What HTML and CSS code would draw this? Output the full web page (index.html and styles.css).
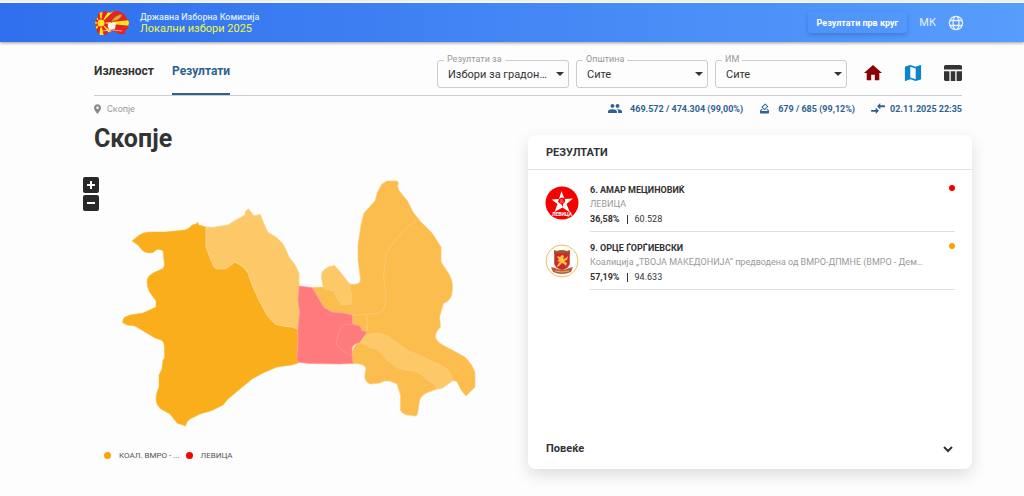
FILE: index.html
```html
<!DOCTYPE html>
<html lang="mk">
<head>
<meta charset="utf-8">
<meta name="viewport" content="width=device-width, initial-scale=1">
<title>Локални избори 2025</title>
<link rel="stylesheet" href="styles.css">
</head>
<body>
<header class="topbar">
  <a class="brand" href="#">
    <svg class="brand-logo" viewBox="0 0 36 26" aria-hidden="true">
      <defs><clipPath id="land"><path d="M1 11 4 7 4 3 9 2 12 1 16 3 20 1 24 1 29 3 32 7 35 12 34 18 31 21 31 24 25 24 20 21 15 22 12 25 6 25 3 22 2 17Z"/></clipPath></defs>
      <g clip-path="url(#land)">
        <path fill="#e32424" d="M0 0h36v26H0z"/>
        <path fill="#ffe51f" d="M7 13 5-1h4zM7 13 16-1h6zM7 13 37 10v6zM7 13 5 27h5zM7 13-1 6V1zM7 13-1 19v5zM7 13-1 11v4zM7 13 18 27h6z"/>
        <circle cx="7" cy="13" r="4.400" fill="#e32424"/><circle cx="7" cy="13" r="3.500" fill="#ffe51f"/>
      </g>
      <path fill="#f8f3ec" d="M14 13q5-1 8 0l-1 6-6 1q-2-4-1-7z"/>
      <path fill="#e4a934" stroke="#8b651f" stroke-width=".4" d="M17 13q2-7 11-9-1 6-9 7z"/>
      <path d="M8 21q10-2 20 0" fill="none" stroke="#f2c6b8" stroke-width=".8"/>
    </svg>
    <span class="brand-text"><span class="brand-org">Државна Изборна Комисија</span><span class="brand-name">Локални избори 2025</span></span>
  </a>
  <div class="top-actions">
    <button class="round-btn" type="button">Резултати прв круг</button>
    <button class="lang-btn" type="button">МК
      <svg viewBox="0 0 16 16" aria-hidden="true"><g fill="none" stroke="currentColor" stroke-width="1.300"><circle cx="8" cy="8" r="6.600"/><ellipse cx="8" cy="8" rx="2.900" ry="6.600"/><path d="M2 5.500h12M2 10.500h12"/></g></svg>
    </button>
  </div>
</header>

<div class="toolbar">
  <nav class="tabs">
    <a class="tab" href="#">Излезност</a>
    <a class="tab tab-active" href="#">Резултати</a>
  </nav>
  <form class="filters">
    <div class="field"><label for="type">Резултати за</label><select id="type"><option>Избори за градоначалник</option></select></div>
    <div class="field"><label for="mun">Општина</label><select id="mun"><option>Сите</option></select></div>
    <div class="field"><label for="im">ИМ</label><select id="im"><option>Сите</option></select></div>
  </form>
  <div class="views">
    <a href="#" class="view view-home" aria-label="Почетна"><svg viewBox="2 2 20 20"><path d="M10 20v-6h4v6h5v-8h3L12 3 2 12h3v8z"/></svg></a>
    <a href="#" class="view view-map" aria-label="Мапа"><svg viewBox="2 2 20 20"><path d="M20.500 3l-.160.030L15 5.100 9 3 3.360 4.900c-.210.070-.360.250-.360.480V20.500c0 .280.220.500.500.500l.160-.030L9 18.900l6 2.100 5.640-1.900c.210-.070.360-.250.360-.480V3.500c0-.280-.220-.500-.500-.500zM15 19l-6-2.110V5l6 2.110V19z"/></svg></a>
    <a href="#" class="view view-table" aria-label="Табела"><svg viewBox="2 2 20 20"><path d="M9.500 10h5v11h-5zM16 21h4c1.100 0 2-.9 2-2v-9h-6v11zM20 3H4c-1.100 0-2 .9-2 2v3h20V5c0-1.100-.9-2-2-2zM2 19c0 1.100.9 2 2 2h4V10H2v9z"/></svg></a>
  </div>
</div>

<div class="status">
  <div class="place"><svg viewBox="4 1 16 22" aria-hidden="true"><path d="M12 1C7.600 1 4 4.600 4 9c0 6 8 14 8 14s8-8 8-14c0-4.400-3.600-8-8-8zm0 11a3 3 0 1 1 0-6 3 3 0 0 1 0 6z"/></svg>Скопје</div>
  <div class="stats">
    <span class="stat"><svg class="stat-wide" viewBox="1 4 22 16" aria-hidden="true"><path d="M16 11c1.660 0 2.990-1.340 2.990-3S17.660 5 16 5s-3 1.340-3 3 1.340 3 3 3zm-8 0c1.660 0 2.990-1.340 2.990-3S9.660 5 8 5 5 6.340 5 8s1.340 3 3 3zm0 2c-2.330 0-7 1.170-7 3.500V19h14v-2.500c0-2.330-4.670-3.500-7-3.500zm8 0c-.290 0-.620.020-.970.050 1.160.840 1.970 1.970 1.970 3.450V19h6v-2.500c0-2.330-4.670-3.500-7-3.500z"/></svg>469.572 / 474.304 (99,00%)</span>
    <span class="stat"><svg class="stat-ballot" viewBox="2 1 20 22" aria-hidden="true"><path d="M18 13h-.680l-2 2h1.910L19 17H5l1.780-2h2.050l-2-2H6l-3 3v4c0 1.100.890 2 1.990 2H19c1.100 0 2-.890 2-2v-4l-3-3zM17 7.950l-4.950 4.950-3.540-3.540 4.950-4.950L17 7.950zm-4.240-5.660L6.390 8.660a1 1 0 0 0 0 1.410l4.950 4.950a1 1 0 0 0 1.410 0l6.360-6.360a1 1 0 0 0 0-1.410L14.160 2.300a1 1 0 0 0-1.400-.010z"/></svg>679 / 685 (99,12%)</span>
    <span class="stat stat-time"><svg class="stat-wide" viewBox="0 0 15 12" aria-hidden="true"><path d="M0 7.500h5V5l3.500 3.500L5 12V9.500H0zM15 2.500h-5V0L6.500 3.500 10 7V4.500h5z"/></svg>02.11.2025 22:35</span>
  </div>
</div>

<main class="content">
  <section class="map-pane">
    <h1>Скопје</h1>
    <div class="map-box">
      <svg class="map" viewBox="94 157 434 284" role="img" aria-label="Мапа на Скопје">
        <g stroke-width="1" stroke-linejoin="round">
          <path fill="#fbae1c" stroke="#fbb633" stroke-width=".5" d="M132 241 138 236Q143 232 150 232L165 232 185 230 189 228 192 225 196 224 197.500 222 199 225 206 227 206 247 211 260 214 267 220 269 226 268 235 262 243 267 248 273 253 287 259 300 267 315 275 324 283 326 292 327 297.500 329 298 343 297 350 297 360 299.500 362.500 292 365 277 367 263 373 252 379 240 389 228 399 223 405 212 410.500 200 414 190 419 187 422 185.500 426 177 423 170 414 161 409Q156 405 156 399L156.500 394 159 387 159 375 162 369 163 360 164.500 358V347Q164 341 161 340L155 338 145 332 135 326 127 325 122.500 322.500Q123 318 125 317L130 315 143 313 156 307V301L149 291Q145 280 149 276L153 273 163 268.500 164.500 265 163 251Q162 249 157 249.500L153 252.500Q146 254 142 250L138 245Z"/>
          <path fill="#fcc868" stroke="#fdd388" d="M206 227 213 227.500 228 225 236 220 245 215 246 211 248.500 209 254 216 260 214.500 267.500 232 277 238 283 244 289 257 295 265 299 273V287L298 303 299.500 318 297.500 329 292 327 283 326 275 324 267 315 259 300 253 287 248 273Q245 267 235 262L226 268.500Q216 270 214 267L211 260 206 247Z"/>
          <path fill="#fbbe4e" stroke="#fcc96a" stroke-width=".6" d="M312 287.500 323 287 349 284Q361 286 360.500 279L358 260V245L361 225 364 213 375 201 377.500 192 382 184 387 181H397L398.500 183 397.500 186Q398 190 401 193L407.500 201 413 212 420 221 432 233 441 247V262L449 274Q454 284 452 292 452 300 443.500 303.500L439.500 317 440.500 327Q434 333 436 339L440 343.500 465 357Q473 365 475 373V387L466 396 461 390 457 381.500 452.500 380.500 442 388 437 389 426 393Q419 397 419 404L417.500 414 416 416 407 415Q401 413 400.500 410V395L397 384 390 381H384L380 383 370 384Q364 381 365 375L366 368Q364 363 352.500 363.500L351.500 356Q353 344 360 342.500L366 334V331H362.500L360 326 352.500 324V315L343 313 332 312 324 307.500Z"/>
          <path fill="#ff7a7d" stroke="#ff9b9b" stroke-width=".7" d="M299 286 312 287.500 324 307.500 332 312 343 313 352.500 315V324L360 326 362.500 331H366V334L360 342.500Q352 344 352 349L352 356 353 363.500 340 364 310 363.500 300 362.500Q296 361 297 357L298 343V327L299.500 313 298 300Z"/>
          <path fill="none" stroke="#ff8d8e" d="M352.500 324 345 324.500 339.500 330 336.500 341Q336 346 342 350L351.500 356"/>
          <path fill="#fcc868" stroke="#fdd07c" stroke-width=".7" d="M323 286 321.500 278Q321 272 325 269 329 266 334.500 265.500L341 273 349.500 284 352 298 350.500 304.500H342L338 300 334 291 325 289Z"/>
          <path fill="#fcc868" stroke="#fdd07c" stroke-width=".7" d="M360 342.500 365 335.500Q376 331 388 336.500L407 350 423 357 440 365 448.500 370 453 380.500 442 388 437 389 435 385 427 379.500 418 372 398 368 387 360 378 349.500 370 347.500Z"/>
          <path fill="none" stroke="#fccb70" d="M416 221Q408 225 403 231L390 247Q385 253 385.500 260L383.500 277 386 295Q385 311 380 313L367 314.500 352.500 315M367 314.500V331"/>
        </g>
      </svg>
      <div class="zoom"><button type="button" aria-label="Зголеми"><svg viewBox="0 0 16 16"><path d="M8 4v8M4 8h8"/></svg></button><button type="button" aria-label="Намали"><svg viewBox="0 0 16 16"><path d="M4 8h8"/></svg></button></div>
    </div>
    <ul class="legend">
      <li><span class="dot dot-orange"></span>КОАЛ. ВМРО - ...</li>
      <li><span class="dot dot-red"></span>ЛЕВИЦА</li>
    </ul>
  </section>

  <section class="card">
    <h2>РЕЗУЛТАТИ</h2>
    <ul class="results">
      <li class="result">
        <svg class="party" viewBox="0 0 34 34" aria-hidden="true">
          <circle cx="17" cy="17" r="16.500" fill="#f70000"/>
          <path fill="#fff" d="M16.500 5 19.500 13 28 12.500 21.500 18 25 26.500 17.500 21.500 9.500 26 12.500 18 6.500 13.500 14 13z"/>
          <path fill="#f70000" d="M14 13q3-3 6 0v3l-2 2v3l-2-3-3-2z"/><path d="M15 14h3M15 16h4" stroke="#fff" stroke-width=".5"/>
          <text class="party-name" x="17" y="30" text-anchor="middle">ЛЕВИЦА</text>
        </svg>
        <div class="result-body">
          <div class="result-head"><h3>6. АМАР МЕЦИНОВИЌ</h3><span class="dot dot-red"></span></div>
          <p class="coalition">ЛЕВИЦА</p>
          <p class="votes"><strong>36,58%</strong><span class="bar"></span>60.528</p>
        </div>
      </li>
      <li class="result">
        <svg class="party" viewBox="0 0 34 34" aria-hidden="true">
          <circle cx="17" cy="17" r="16" fill="#fff" stroke="#efbd61"/>
          <path fill="#a8562e" d="M9 6l3 1q5-2 10 0l3-1v4H9z"/>
          <path fill="#cf2730" stroke="#a9522c" stroke-width=".6" d="M9.500 9h15v10q0 5-7.500 7-7.500-2-7.500-7z"/>
          <path fill="#ffc542" d="M12 12l3 1 2-2 2 1-1 3 3-1 2-2-1 4-3 1 3 2-1 3-2-2-2-1-3 3-2 1 1-3 2-2-3-1 2-1z"/>
          <path fill="#b85a35" d="M6 23l4 1q7 4 14 0l4-1-2 5q-9 4-18 0z"/>
          <path d="M10 27q7 2 14 0" stroke="#e2b15d" fill="none"/>
        </svg>
        <div class="result-body">
          <div class="result-head"><h3>9. ОРЦЕ ЃОРЃИЕВСКИ</h3><span class="dot dot-orange"></span></div>
          <p class="coalition">Коалиција „ТВОЈА МАКЕДОНИЈА“ предводена од ВМРО-ДПМНЕ (ВМРО - Дем…</p>
          <p class="votes"><strong>57,19%</strong><span class="bar"></span>94.633</p>
        </div>
      </li>
    </ul>
    <button class="more" type="button">Повеќе<svg viewBox="0 0 12 12" aria-hidden="true"><path d="M2 4l4 4 4-4"/></svg></button>
  </section>
</main>
</body>
</html>
```

FILE: styles.css
```css
* { box-sizing: border-box; }
body { margin: 0; background: #fdfdfd; color: #333; font: 10px/14px Roboto, sans-serif; }
h1, h2, h3, p, ul { margin: 0; padding: 0; }
ul { list-style: none; }
a { color: inherit; text-decoration: none; }
button { font: inherit; border: 0; background: none; padding: 0; color: inherit; cursor: pointer; }
svg { display: block; flex: none; }

.topbar { display: flex; align-items: center; justify-content: space-between; height: 42px; padding: 3px 60px 0 94px; background: linear-gradient(#eeefef 0 2px, #fdfdfd 2px) top / 100% 3px no-repeat, linear-gradient(90deg, #2f6fed, #579dfc); box-shadow: 0 1px 3px rgba(0, 0, 0, .4); }
.brand { display: flex; align-items: center; gap: 10px; }
.brand-logo { width: 36px; height: 26px; }
.brand-text { display: flex; flex-direction: column; line-height: 11px; }
.brand-org { color: #dde9ff; font-size: 9px; font-weight: 500; }
.brand-name { color: #f4f63b; font-size: 11px; }
.top-actions { display: flex; align-items: center; gap: 12px; }
.round-btn { height: 21px; padding: 0 9px; border-radius: 3px; color: #fff; font-weight: 700; font-size: 9px; box-shadow: 0 2px 4px rgba(30, 60, 130, .3); }
.lang-btn { display: flex; align-items: center; gap: 12px; color: #e5efff; font-size: 11px; }
.lang-btn svg { width: 16px; height: 16px; }

.toolbar { display: flex; align-items: stretch; height: 54px; margin: 0 62px 0 94px; border-bottom: 1px solid #ccc; }
.tabs { display: flex; gap: 18px; }
.tab { padding-top: 22px; font-size: 12px; font-weight: 700; }
.tab-active { color: #2d6292; border-bottom: 2px solid #2d6292; }
.filters { display: flex; gap: 7px; margin-left: auto; padding-top: 18px; }
.field { position: relative; width: 132px; height: 28px; }
.field::after { content: ""; position: absolute; right: 5px; top: 12px; border: 4px solid transparent; border-top-color: #333; border-bottom: 0; pointer-events: none; }
.field label { position: absolute; left: 7px; top: -8px; padding: 0 3px; background: #fdfdfd; color: #999; font-size: 9px; line-height: 14px; }
.field select { appearance: none; width: 100%; height: 100%; padding: 0 18px 0 10px; border: 1px solid #ccc; border-radius: 3px; background: transparent; color: #333; font: 11px Roboto, sans-serif; text-overflow: ellipsis; overflow: hidden; white-space: nowrap; }
.views { display: flex; gap: 22px; margin-left: 17px; padding-top: 22px; }
.view svg { width: 18px; height: 18px; fill: currentColor; }
.view-home { color: #8b0000; }
.view-map { color: #0a87cc; }
.view-table { color: #333; }

.status { display: flex; align-items: center; justify-content: space-between; height: 25px; margin: 0 62px 0 94px; font-size: 9px; }
.place { display: flex; align-items: center; gap: 6px; color: #999; }
.place svg { width: 7px; height: 10px; fill: #8a8a8a; }
.stats { display: flex; gap: 16px; color: #2d6292; font-weight: 700; }
.stat { display: flex; align-items: center; gap: 8px; }
.stat-time { gap: 5px; }
.stat svg { height: 11px; fill: currentColor; }
.stat .stat-wide { width: 14px; }
.stat .stat-ballot { width: 11px; }

.content { display: grid; grid-template-columns: minmax(0, 434fr) minmax(0, 444fr); align-items: start; padding: 0 52px 24px 94px; }
h1 { font-size: 25px; line-height: 36px; font-weight: 700; }
.map-box { position: relative; }
.map { width: 100%; height: auto; }
.zoom { position: absolute; left: -11px; top: 20px; display: flex; flex-direction: column; gap: 2px; }
.zoom button { width: 16px; height: 16px; border-radius: 2px; background: #282828; }
.zoom svg { width: 16px; height: 16px; fill: none; stroke: #fff; stroke-width: 2; }
.legend { display: flex; gap: 6px; padding: 7px 10px; font-size: 8px; line-height: 15px; color: #555; }
.legend li { display: flex; align-items: center; gap: 8px; }
.dot { flex: none; width: 6px; height: 6px; border-radius: 50%; }
.legend .dot { width: 7px; height: 7px; }
.dot-orange { background: #ffa200; }
.dot-red { background: #f70000; }

.card { display: flex; flex-direction: column; min-height: 334px; margin-top: 14px; border-radius: 8px; background: #fff; box-shadow: 0 6px 16px rgba(0, 0, 0, .13); }
.card h2 { padding: 11px 18px 9px; border-bottom: 1px solid #e2e2e2; font-size: 11px; line-height: 14px; font-weight: 700; }
.results { padding: 4px 17px 0; }
.result { display: flex; align-items: center; gap: 11px; height: 58px; }
.party { width: 34px; height: 34px; }
.party-name { font: 700 5px Roboto, sans-serif; fill: #fff; }
.result-body { flex: 1; min-width: 0; height: 100%; padding-top: 9px; border-bottom: 1px solid #e0e0e0; }
.result-head { display: flex; justify-content: space-between; align-items: center; }
.result-head .dot { margin-bottom: 4px; }
.result h3 { font-size: 9px; line-height: 14px; font-weight: 700; }
.coalition { color: #999; font-size: 9px; line-height: 14px; }
.votes { display: flex; align-items: center; font-size: 9px; line-height: 16px; }
.bar { width: 1px; height: 9px; margin: 0 7px; background: #333; }
.more { display: flex; align-items: center; justify-content: space-between; margin-top: auto; padding: 14px 18px 13px; font-size: 11px; line-height: 14px; font-weight: 700; }
.more svg { width: 12px; height: 12px; fill: none; stroke: #333; stroke-width: 2; }
```
